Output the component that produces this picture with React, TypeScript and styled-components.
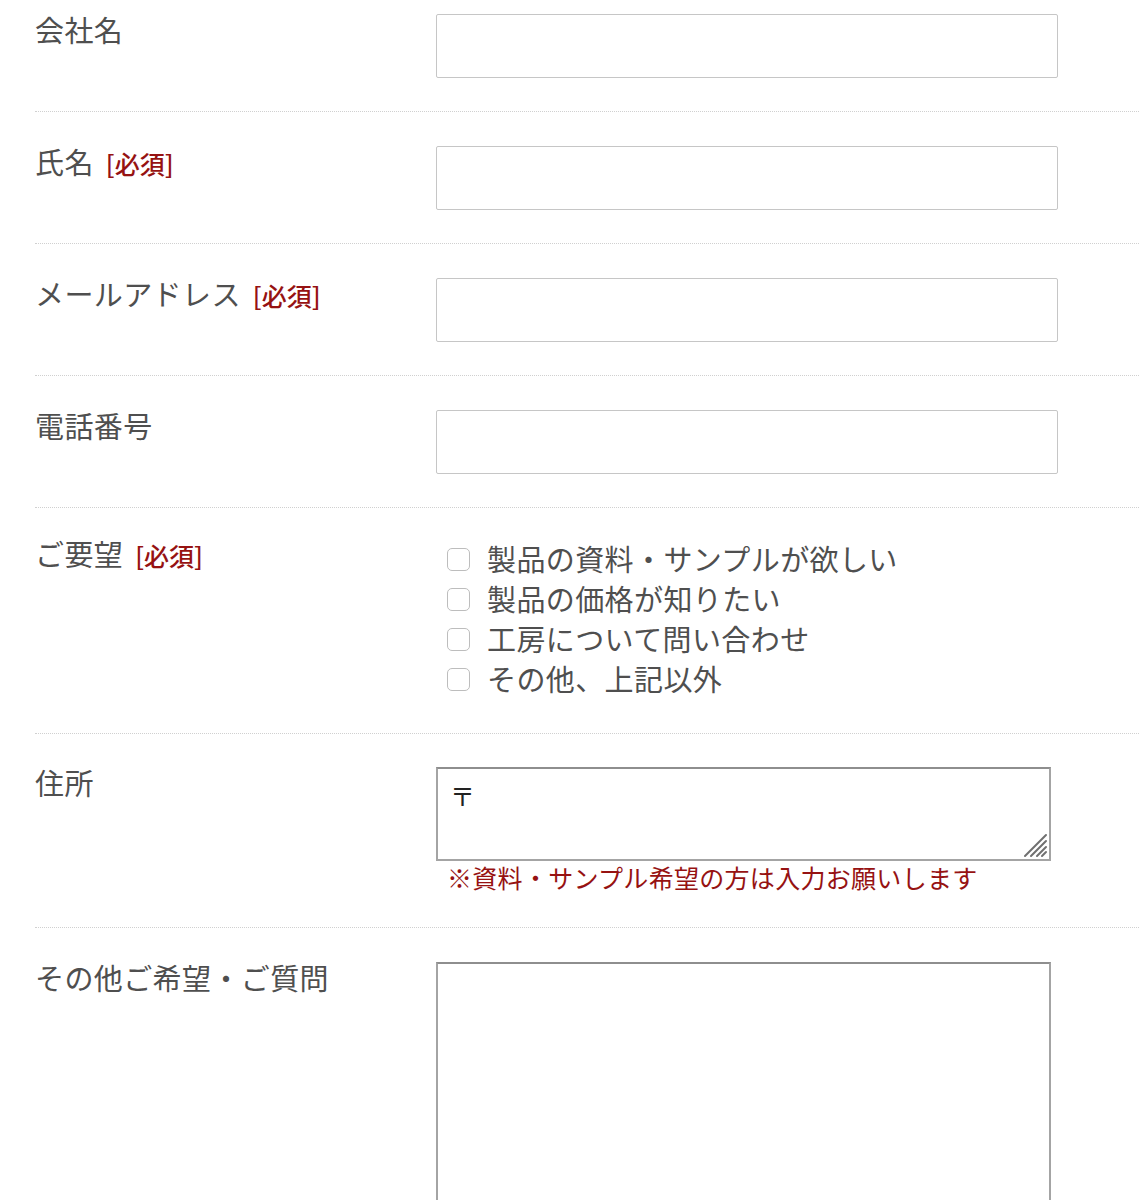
import styled, { createGlobalStyle } from 'styled-components';

const GlobalStyle = createGlobalStyle`
  body {
    margin: 0;
    background: #fff;
    font-family: "Noto Sans CJK JP", "Noto Sans", sans-serif;
  }
`;

const requests = [
  '製品の資料・サンプルが欲しい',
  '製品の価格が知りたい',
  '工房について問い合わせ',
  'その他、上記以外',
];

function Label({ text, required }: { text: string; required?: boolean }) {
  return (
    <S.Label>
      {text}
      {required && <S.Required>[必須]</S.Required>}
    </S.Label>
  );
}

export default function App() {
  return (
    <>
      <GlobalStyle />
      <S.Form>
        <S.Row $top={14} $bottom={33}>
          <Label text="会社名" />
          <S.Input type="text" />
        </S.Row>
        <S.Row>
          <Label text="氏名" required />
          <S.Input type="text" />
        </S.Row>
        <S.Row>
          <Label text="メールアドレス" required />
          <S.Input type="email" />
        </S.Row>
        <S.Row>
          <Label text="電話番号" />
          <S.Input type="tel" />
        </S.Row>
        <S.Row $top={30} $bottom={35}>
          <Label text="ご要望" required />
          <S.CheckList>
            {requests.map((r) => (
              <S.CheckItem key={r}>
                <S.Check type="checkbox" />
                {r}
              </S.CheckItem>
            ))}
          </S.CheckList>
        </S.Row>
        <S.Row $top={33} $bottom={33}>
          <Label text="住所" />
          <div>
            <S.AreaWrap>
              <S.TextArea $height={94} defaultValue="〒" />
              <S.Grip width="26" height="26" viewBox="0 0 26 26">
                <g stroke="#707070" strokeWidth="2" strokeLinecap="round">
                  <line x1="3" y1="24" x2="24" y2="3" />
                  <line x1="9" y1="24" x2="24" y2="9" />
                  <line x1="15" y1="24" x2="24" y2="15" />
                  <line x1="20" y1="24" x2="24" y2="20" />
                </g>
              </S.Grip>
            </S.AreaWrap>
            <S.Note>※資料・サンプル希望の方は入力お願いします</S.Note>
          </div>
        </S.Row>
        <S.Row $last>
          <Label text="その他ご希望・ご質問" />
          <S.TextArea $height={300} />
        </S.Row>
      </S.Form>
    </>
  );
}

const S = {
  Form: styled.form`
    padding-left: 35px;
    overflow: hidden;
  `,
  Row: styled.div<{ $top?: number; $bottom?: number; $last?: boolean }>`
    display: grid;
    grid-template-columns: 401px 1fr;
    align-items: start;
    padding: ${({ $top = 34 }) => $top}px 0 ${({ $bottom = 33 }) => $bottom}px;
    border-bottom: ${({ $last }) => ($last ? 'none' : '1px dotted #d0d0d0')};
  `,
  Label: styled.div`
    font-size: 29px;
    line-height: 1.1;
    letter-spacing: 0.4px;
    color: #4f4f4f;
    display: flex;
    align-items: baseline;
  `,
  Required: styled.span`
    font-size: 25px;
    font-weight: 500;
    letter-spacing: 0;
    color: #961212;
    margin-left: 12px;
  `,
  Input: styled.input`
    box-sizing: border-box;
    width: 622px;
    height: 64px;
    border: 1px solid #c6c6c6;
    border-radius: 2px;
    background: #fff;
    font-size: 25px;
    padding: 0 12px;
    outline: none;
  `,
  CheckList: styled.div`
    display: flex;
    flex-direction: column;
    padding-left: 11px;
  `,
  CheckItem: styled.label`
    display: flex;
    align-items: center;
    height: 40px;
    font-size: 29px;
    letter-spacing: 0.4px;
    color: #4f4f4f;
  `,
  Check: styled.input`
    appearance: none;
    box-sizing: border-box;
    width: 23px;
    height: 23px;
    margin: 2px 17px 0 0;
    border: 1px solid #bdbdbd;
    border-radius: 5px;
    background: #fff;
  `,
  AreaWrap: styled.div`
    position: relative;
    width: 615px;
  `,
  TextArea: styled.textarea<{ $height: number }>`
    display: block;
    box-sizing: border-box;
    width: 615px;
    height: ${({ $height }) => $height}px;
    border: 2px solid #a4a4a4;
    border-top-color: #8e8e8e;
    padding: 11px 12px;
    font-family: "Noto Sans CJK JP", sans-serif;
    font-size: 25px;
    line-height: 1.2;
    color: #222;
    resize: none;
    outline: none;
    background: #fff;
  `,
  Grip: styled.svg`
    position: absolute;
    right: 3px;
    bottom: 3px;
  `,
  Note: styled.div`
    font-size: 25px;
    line-height: 1.3;
    letter-spacing: 0.3px;
    color: #961212;
    padding-left: 11px;
  `,
};
